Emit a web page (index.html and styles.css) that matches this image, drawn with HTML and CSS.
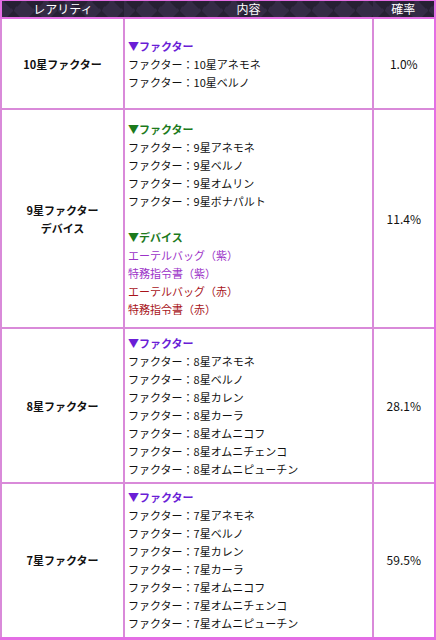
FILE: index.html
```html
<!DOCTYPE html>
<html lang="ja">
<head>
<meta charset="utf-8">
<link rel="stylesheet" href="styles.css">
</head>
<body>
<table class="rates">
  <colgroup>
    <col class="c1"><col class="c2"><col class="c3">
  </colgroup>
  <thead>
    <tr class="head"><th>レアリティ</th><th>内容</th><th>確率</th></tr>
  </thead>
  <tbody>
    <tr class="r1">
      <td class="rar">10星ファクター</td>
      <td class="list">
        <div class="cat purple">▼ファクター</div>
        <div>ファクター：10星アネモネ</div>
        <div>ファクター：10星ベルノ</div>
      </td>
      <td class="pct">1.0%</td>
    </tr>
    <tr class="r2">
      <td class="rar">9星ファクター<br>デバイス</td>
      <td class="list">
        <div class="cat green">▼ファクター</div>
        <div>ファクター：9星アネモネ</div>
        <div>ファクター：9星ベルノ</div>
        <div>ファクター：9星オムリン</div>
        <div>ファクター：9星ボナパルト</div>
        <div class="blank">&nbsp;</div>
        <div class="cat green">▼デバイス</div>
        <div class="violet">エーテルバッグ（紫）</div>
        <div class="violet">特務指令書（紫）</div>
        <div class="red">エーテルバッグ（赤）</div>
        <div class="red">特務指令書（赤）</div>
      </td>
      <td class="pct">11.4%</td>
    </tr>
    <tr class="r3">
      <td class="rar">8星ファクター</td>
      <td class="list">
        <div class="cat purple">▼ファクター</div>
        <div>ファクター：8星アネモネ</div>
        <div>ファクター：8星ベルノ</div>
        <div>ファクター：8星カレン</div>
        <div>ファクター：8星カーラ</div>
        <div>ファクター：8星オムニコフ</div>
        <div>ファクター：8星オムニチェンコ</div>
        <div>ファクター：8星オムニピューチン</div>
      </td>
      <td class="pct">28.1%</td>
    </tr>
    <tr class="r4">
      <td class="rar">7星ファクター</td>
      <td class="list">
        <div class="cat purple">▼ファクター</div>
        <div>ファクター：7星アネモネ</div>
        <div>ファクター：7星ベルノ</div>
        <div>ファクター：7星カレン</div>
        <div>ファクター：7星カーラ</div>
        <div>ファクター：7星オムニコフ</div>
        <div>ファクター：7星オムニチェンコ</div>
        <div>ファクター：7星オムニピューチン</div>
      </td>
      <td class="pct">59.5%</td>
    </tr>
  </tbody>
</table>
</body>
</html>
```
FILE: styles.css
```css
html, body {
  margin: 0;
  padding: 0;
  background: #ffffff;
}
body {
  font-family: "Noto Sans CJK JP", "Noto Sans", sans-serif;
  font-size: 11px;
  color: #111111;
}
.rates {
  width: 436px;
  border-collapse: collapse;
  table-layout: fixed;
  border-top: 1px solid #e46ee4;
  border-left: 2px solid #e46ee4;
  border-right: 3px solid #e46ee4;
  border-bottom: 3px solid #e46ee4;
}
.c1 { width: 123px; }
.c2 { width: 249px; }
.c3 { width: 62px; }
.head th {
  height: 16px;
  padding: 0;
  font-weight: normal;
  font-size: 12px;
  line-height: 16px;
  color: #ffffff;
  text-align: center;
  background-color: #2a2339;
  background-image: conic-gradient(from 45deg, #342b45 25%, #262033 0 50%, #342b45 0 75%, #262033 0);
  background-size: 22px 18px;
  border-bottom: 2px solid #e46ee4;
}
td {
  border: 2px solid #d98ad9;
  padding: 0 4px;
  vertical-align: middle;
  line-height: 18px;
}
.r1 { height: 91px; }
.r2 { height: 219px; }
.r3 { height: 155px; }
.r4 { height: 155px; }
.rar {
  text-align: center;
  font-weight: bold;
}
.pct {
  text-align: center;
  font-size: 12px;
}
.list {
  padding: 0 3px;
  white-space: nowrap;
}
.cat {
  font-weight: bold;
}
.purple { color: #6a1ed6; }
.green { color: #1c7a1c; }
.violet { color: #9c33c8; }
.red { color: #a8141a; }
```
